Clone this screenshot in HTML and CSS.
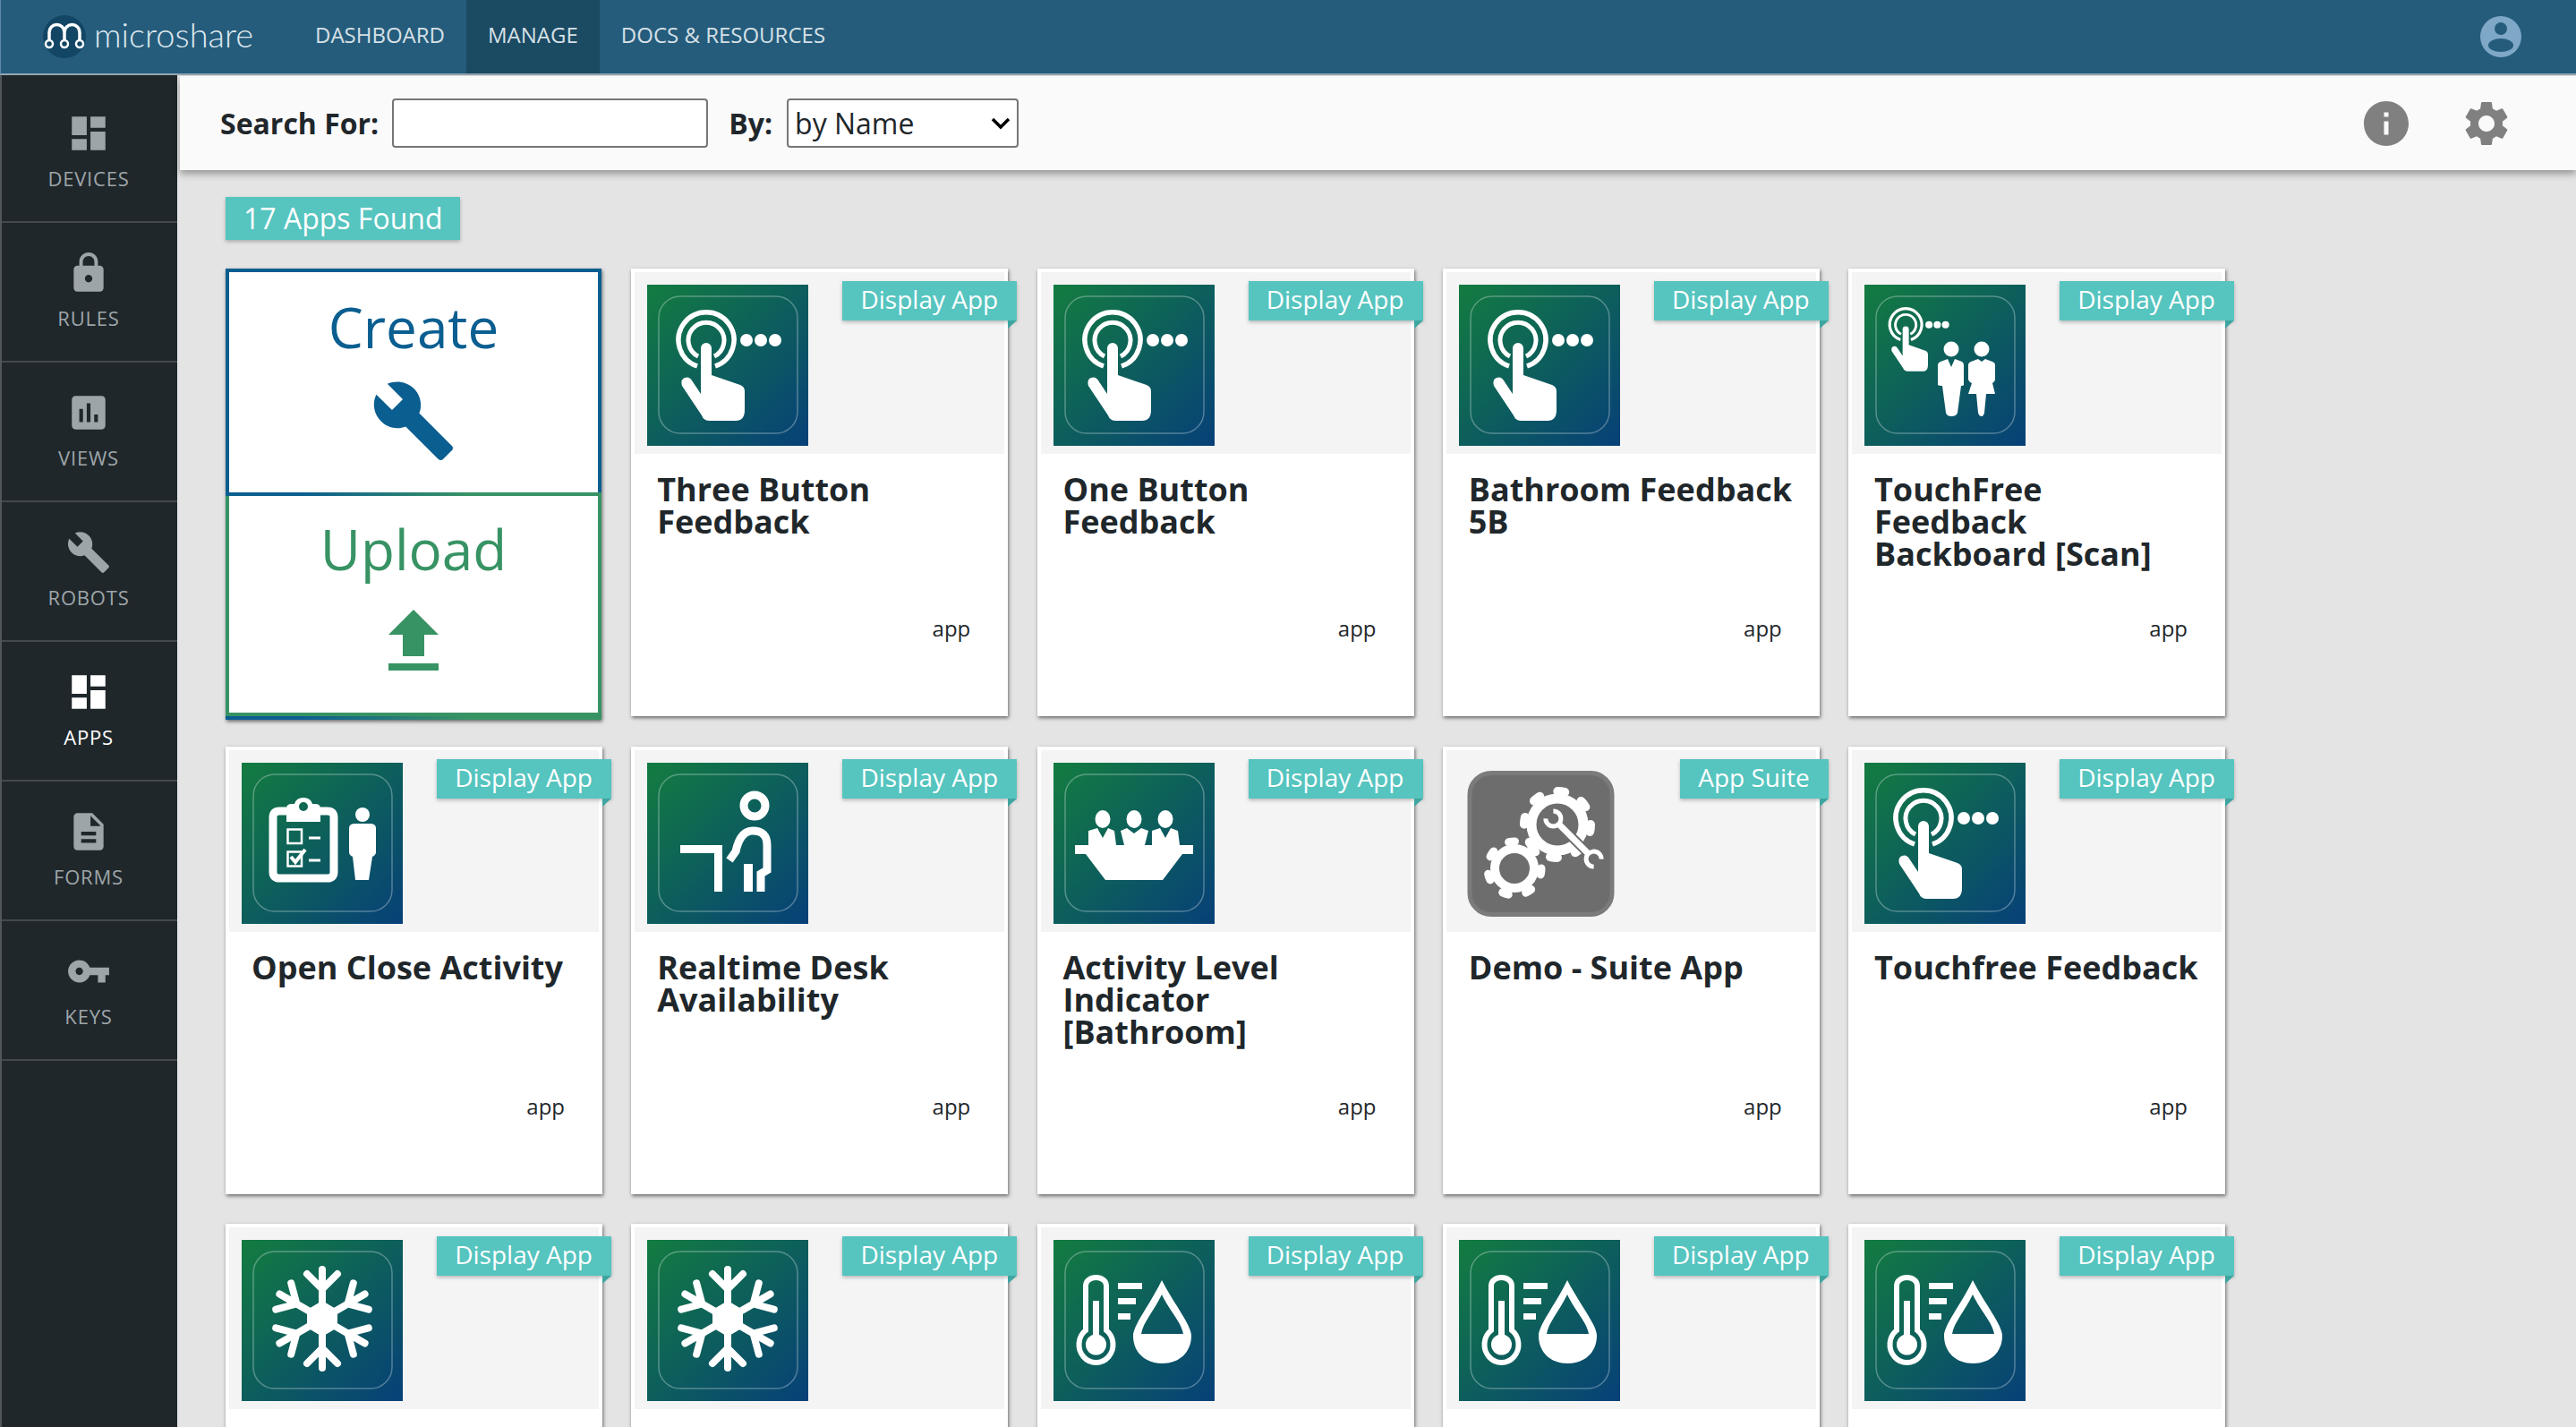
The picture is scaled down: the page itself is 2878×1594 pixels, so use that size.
FILE: index.html
```html
<!DOCTYPE html>
<html lang="en">
<head>
<meta charset="utf-8">
<title>Microshare - Apps</title>
<link rel="stylesheet" href="styles.css">
</head>
<body>
<svg class="sprite" xmlns="http://www.w3.org/2000/svg">
  <symbol id="hand" viewBox="0 0 180 180">
    <path class="line" d="M56 91A31 31 0 1 1 76 91" stroke-width="5.5"/>
    <path class="line" d="M57 80A20 20 0 1 1 75 80" stroke-width="5"/>
    <circle cx="111" cy="62" r="7"/><circle cx="127" cy="62" r="7"/><circle cx="143" cy="62" r="7"/>
    <path d="M60 71a6 6 0 0 1 12 0V101L104 112Q109 114 109 119V140Q109 152 99 152H70Q63 152 61 146L39 113Q37 106 42 104Q47 102 50 107L60 122Z"/>
  </symbol>
  <symbol id="i-touch" viewBox="0 0 180 180">
    <rect class="frame" x="13" y="13" width="155" height="153" rx="24"/>
    <use href="#hand" width="180" height="180"/>
  </symbol>
  <symbol id="i-people" viewBox="0 0 180 180">
    <rect class="frame" x="13" y="13" width="155" height="153" rx="24"/>
    <use href="#hand" x="8" y="9" width="104" height="104"/>
    <circle cx="97" cy="72" r="8.5"/><circle cx="131" cy="72" r="8.5"/>
    <path d="M82 90Q82 87 85 86L93 83L97 92L101 83L109 86Q111 87 111 90V112Q111 113 108 113L104 143Q103 147 97 147Q92 147 91 143L87 113Q83 113 82 112Z"/>
    <path d="M116 90Q116 87 119 86L127 83L131 86L135 83L143 86Q146 87 146 90V106Q146 108 143 110L146 122H136L134 143Q133 147 131 147Q128 147 127 143L125 122H116L120 110Q116 108 116 105Z"/>
  </symbol>
  <symbol id="i-clipboard" viewBox="0 0 180 180">
    <rect class="frame" x="13" y="13" width="155" height="153" rx="24"/>
    <path class="line" d="M50 54H42Q35 54 35 61V122Q35 129 42 129H96Q103 129 103 122V61Q103 54 96 54H88" stroke-width="9"/>
    <path fill-rule="evenodd" d="M50 51Q50 46 56 46H59Q61 39 69 39Q77 39 79 46H82Q88 46 88 51V66H50ZM69 44A5 5 0 1 0 69 54A5 5 0 1 0 69 44Z"/>
    <rect class="line" x="51.5" y="74.5" width="15.5" height="15.5" stroke-width="2.5"/>
    <rect class="line" x="51.5" y="99.5" width="15.5" height="16" stroke-width="2.5"/>
    <path class="line" d="M55 105L60 111L71 97" stroke-width="4"/>
    <rect x="75" y="82.5" width="13" height="3"/><rect x="75" y="107.5" width="13" height="3"/>
    <circle cx="135" cy="58" r="8"/>
    <path d="M120 73Q120 68 127 68H143Q150 68 150 73V100Q150 103 146 105L142 131H127L124 105Q120 103 120 100Z"/>
  </symbol>
  <symbol id="i-desk" viewBox="0 0 180 180">
    <rect class="frame" x="13" y="13" width="155" height="153" rx="24"/>
    <circle class="line" cx="120" cy="48" r="12" stroke-width="9"/>
    <path d="M37 92H84V144H75V101H37Z"/>
    <path class="line" d="M92 109L99 99Q104 76 118 76Q134 76 134 92V120L127 124V144" stroke-width="9"/>
    <rect x="108" y="113" width="10" height="31"/>
  </symbol>
  <symbol id="i-meeting" viewBox="0 0 180 180">
    <rect class="frame" x="13" y="13" width="155" height="153" rx="24"/>
    <ellipse cx="55" cy="63" rx="8.5" ry="10"/><ellipse cx="90" cy="63" rx="8.5" ry="10"/><ellipse cx="125" cy="63" rx="8.5" ry="10"/>
    <path d="M39 76L49 73L55 84L61 73L68 76L70 92H39Z"/>
    <path d="M75 76L82 73L90 79L98 73L106 76L102 92H79Z"/>
    <path d="M110 76L119 73L125 84L131 73L139 76L141 92H110Z"/>
    <path d="M24 92H156V102H144L122 131H58L36 102H24Z"/>
  </symbol>
  <symbol id="i-gears" viewBox="0 0 180 180">
    <rect class="suite-box" x="12" y="11.5" width="159" height="158" rx="24"/>
    <circle class="line" cx="110" cy="69" r="29" stroke-width="11"/>
    <circle class="teeth" cx="110" cy="69" r="37" stroke-width="10" stroke-dasharray="8 21.06"/>
    <circle class="line" cx="62" cy="118" r="22" stroke-width="10"/>
    <circle class="teeth" cx="62" cy="118" r="30" stroke-width="9" stroke-dasharray="7 19.93"/>
    <g transform="translate(128 85) rotate(45)">
      <path class="gap" d="M-24 0H24M-38 -6A8.5 8.5 0 1 1 -38 6M38 -6A8.5 8.5 0 1 0 38 6"/>
      <path class="line" d="M-38 -6A8.5 8.5 0 1 1 -38 6M38 -6A8.5 8.5 0 1 0 38 6" stroke-width="5"/>
      <rect class="wrench-bar" x="-25" y="-3.5" width="50" height="7"/>
    </g>
  </symbol>
  <symbol id="i-snow" viewBox="0 0 180 180">
    <rect class="frame" x="13" y="13" width="155" height="153" rx="24"/>
    <path d="M90 68L107 78V98L90 108L73 98V78Z"/>
    <g id="arm"><path class="line round" d="M90 88V33M90 55L73 38M90 55L107 38" stroke-width="8"/></g>
    <use href="#arm" transform="rotate(60 90 88)"/><use href="#arm" transform="rotate(120 90 88)"/>
    <use href="#arm" transform="rotate(180 90 88)"/><use href="#arm" transform="rotate(240 90 88)"/><use href="#arm" transform="rotate(300 90 88)"/>
  </symbol>
  <symbol id="i-thermo" viewBox="0 0 180 180">
    <rect class="frame" x="13" y="13" width="155" height="153" rx="24"/>
    <path class="line" d="M36 101V51a11.5 9 0 0 1 23 0V101a19 20 0 1 1-23 0Z" stroke-width="6"/>
    <rect x="44" y="68" width="7" height="45"/><circle cx="47.5" cy="117" r="11.5"/>
    <rect x="72" y="48" width="27" height="7"/><rect x="72" y="65" width="20" height="7"/><rect x="72" y="82" width="14" height="7"/>
    <path fill-rule="evenodd" d="M121 45C135 72 154 95 154 107C154 126 140 138 121.5 138C103 138 89 126 89 107C89 95 108 72 121 45ZM121 61C112 80 100 92 98 105H145C143 92 130 80 121 61Z"/>
  </symbol>
</svg>

<header class="topbar">
  <a class="brand">
    <svg class="brand-mark" viewBox="0 0 48 48">
      <circle cx="24" cy="24" r="24" fill="#124664"/>
      <path class="brand-arch" d="M7 31V19a8.5 8.5 0 0 1 17 0V31M24 19a8.5 8.5 0 0 1 17 0V31"/>
      <circle class="brand-node" cx="7" cy="32" r="4"/><circle class="brand-node" cx="24" cy="32" r="4"/><circle class="brand-node" cx="41" cy="32" r="4"/>
    </svg>
    <span class="brand-name">microshare</span>
  </a>
  <nav class="topnav">
    <a class="topnav-item">DASHBOARD</a>
    <a class="topnav-item is-active">MANAGE</a>
    <a class="topnav-item">DOCS &amp; RESOURCES</a>
  </nav>
  <svg class="account" viewBox="0 0 46 46">
    <circle cx="23" cy="23" r="23" fill="#7fa8c6"/>
    <circle cx="23" cy="14" r="7" fill="#255c7c"/>
    <ellipse cx="23" cy="32.5" rx="14" ry="7.5" fill="#255c7c"/>
  </svg>
</header>

<div class="shell">
  <aside class="sidebar">
    <a class="side-item"><svg class="side-icon" viewBox="0 0 24 24"><path d="M3 13h8V3H3v10zm0 8h8v-6H3v6zm10 0h8V11h-8v10zm0-18v6h8V3h-8z"/></svg><span>DEVICES</span></a>
    <a class="side-item"><svg class="side-icon" viewBox="0 0 24 24"><path d="M18 8h-1V6c0-2.76-2.24-5-5-5S7 3.24 7 6v2H6c-1.1 0-2 .9-2 2v10c0 1.1.9 2 2 2h12c1.1 0 2-.9 2-2V10c0-1.1-.9-2-2-2zm-6 9c-1.1 0-2-.9-2-2s.9-2 2-2 2 .9 2 2-.9 2-2 2zm3.1-9H8.9V6c0-1.71 1.39-3.1 3.1-3.1 1.71 0 3.1 1.39 3.1 3.1v2z"/></svg><span>RULES</span></a>
    <a class="side-item"><svg class="side-icon" viewBox="0 0 24 24"><path d="M19 3H5c-1.1 0-2 .9-2 2v14c0 1.1.9 2 2 2h14c1.1 0 2-.9 2-2V5c0-1.1-.9-2-2-2zM9 17H7v-7h2v7zm4 0h-2V7h2v10zm4 0h-2v-4h2v4z"/></svg><span>VIEWS</span></a>
    <a class="side-item"><svg class="side-icon" viewBox="0 0 24 24"><path d="M22.7 19l-9.1-9.1c.9-2.3.4-5-1.5-6.9-2-2-5-2.4-7.4-1.3L9 6 6 9 1.6 4.7C.4 7.1.9 10.1 2.9 12.1c1.9 1.9 4.6 2.4 6.9 1.5l9.1 9.1c.4.4 1 .4 1.4 0l2.3-2.3c.5-.4.5-1.1.1-1.4z"/></svg><span>ROBOTS</span></a>
    <a class="side-item is-active"><svg class="side-icon" viewBox="0 0 24 24"><path d="M3 13h8V3H3v10zm0 8h8v-6H3v6zm10 0h8V11h-8v10zm0-18v6h8V3h-8z"/></svg><span>APPS</span></a>
    <a class="side-item"><svg class="side-icon" viewBox="0 0 24 24"><path d="M14 2H6c-1.1 0-1.99.9-1.99 2L4 20c0 1.1.89 2 1.99 2H18c1.1 0 2-.9 2-2V8l-6-6zm2 16H8v-2h8v2zm0-4H8v-2h8v2zm-3-5V3.5L18.5 9H13z"/></svg><span>FORMS</span></a>
    <a class="side-item"><svg class="side-icon" viewBox="0 0 24 24"><path d="M12.65 10C11.83 7.67 9.61 6 7 6c-3.31 0-6 2.69-6 6s2.69 6 6 6c2.61 0 4.83-1.67 5.65-4H17v4h4v-4h2v-4H12.65zM7 14c-1.1 0-2-.9-2-2s.9-2 2-2 2 .9 2 2-.9 2-2 2z"/></svg><span>KEYS</span></a>
  </aside>

  <main class="main">
    <form class="searchbar">
      <label class="search-label" for="q">Search For:</label>
      <input class="search-input" id="q" type="text">
      <label class="search-label by-label" for="by">By:</label>
      <select class="search-select" id="by"><option>by Name</option></select>
      <div class="tools">
        <svg class="tool" viewBox="0 0 24 24"><path d="M12 2C6.48 2 2 6.48 2 12s4.48 10 10 10 10-4.48 10-10S17.52 2 12 2zm1 15h-2v-6h2v6zm0-8h-2V7h2v2z"/></svg>
        <svg class="tool" viewBox="0 0 24 24"><path d="M19.14 12.94c.04-.3.06-.61.06-.94 0-.32-.02-.64-.07-.94l2.03-1.58c.18-.14.23-.41.12-.61l-1.92-3.32c-.12-.22-.37-.29-.59-.22l-2.39.96c-.5-.38-1.03-.7-1.62-.94l-.36-2.54c-.04-.24-.24-.41-.48-.41h-3.84c-.24 0-.43.17-.47.41l-.36 2.54c-.59.24-1.13.57-1.62.94l-2.39-.96c-.22-.08-.47 0-.59.22L2.74 8.87c-.12.21-.08.47.12.61l2.03 1.58c-.05.3-.09.63-.09.94s.02.64.07.94l-2.03 1.58c-.18.14-.23.41-.12.61l1.92 3.32c.12.22.37.29.59.22l2.39-.96c.5.38 1.03.7 1.62.94l.36 2.54c.05.24.24.41.48.41h3.84c.24 0 .44-.17.47-.41l.36-2.54c.59-.24 1.13-.56 1.62-.94l2.39.96c.22.08.47 0 .59-.22l1.92-3.32c.12-.22.07-.47-.12-.61l-2.01-1.58zM12 15.6c-1.98 0-3.6-1.62-3.6-3.6s1.62-3.6 3.6-3.6 3.6 1.62 3.6 3.6-1.62 3.6-3.6 3.6z"/></svg>
      </div>
    </form>

    <div class="content">
      <div class="count-chip">17 Apps Found</div>
      <section class="grid">
        <div class="action-card">
          <a class="pane pane-create">
            <span class="pane-title">Create</span>
            <svg class="pane-icon pane-wrench" viewBox="0 0 24 24"><path d="M22.7 19l-9.1-9.1c.9-2.3.4-5-1.5-6.9-2-2-5-2.4-7.4-1.3L9 6 6 9 1.6 4.7C.4 7.1.9 10.1 2.9 12.1c1.9 1.9 4.6 2.4 6.9 1.5l9.1 9.1c.4.4 1 .4 1.4 0l2.3-2.3c.5-.4.5-1.1.1-1.4z"/></svg>
          </a>
          <div class="pane-rule"></div>
          <a class="pane pane-upload">
            <span class="pane-title">Upload</span>
            <svg class="pane-icon" viewBox="0 0 24 24"><path d="M9 16h6v-6h4l-7-7-7 7h4zm-4 2h14v2H5z"/></svg>
          </a>
          <div class="pane-rule"></div>
        </div>

        <article class="card">
          <div class="card-head"><svg class="app-icon"><use href="#i-touch"/></svg><span class="tag">Display App</span></div>
          <h2 class="card-title">Three Button Feedback</h2><p class="card-type">app</p>
        </article>
        <article class="card">
          <div class="card-head"><svg class="app-icon"><use href="#i-touch"/></svg><span class="tag">Display App</span></div>
          <h2 class="card-title">One Button Feedback</h2><p class="card-type">app</p>
        </article>
        <article class="card">
          <div class="card-head"><svg class="app-icon"><use href="#i-touch"/></svg><span class="tag">Display App</span></div>
          <h2 class="card-title">Bathroom Feedback 5B</h2><p class="card-type">app</p>
        </article>
        <article class="card">
          <div class="card-head"><svg class="app-icon"><use href="#i-people"/></svg><span class="tag">Display App</span></div>
          <h2 class="card-title">TouchFree Feedback Backboard [Scan]</h2><p class="card-type">app</p>
        </article>

        <article class="card">
          <div class="card-head"><svg class="app-icon"><use href="#i-clipboard"/></svg><span class="tag">Display App</span></div>
          <h2 class="card-title">Open Close Activity</h2><p class="card-type">app</p>
        </article>
        <article class="card">
          <div class="card-head"><svg class="app-icon"><use href="#i-desk"/></svg><span class="tag">Display App</span></div>
          <h2 class="card-title">Realtime Desk Availability</h2><p class="card-type">app</p>
        </article>
        <article class="card">
          <div class="card-head"><svg class="app-icon"><use href="#i-meeting"/></svg><span class="tag">Display App</span></div>
          <h2 class="card-title">Activity Level Indicator [Bathroom]</h2><p class="card-type">app</p>
        </article>
        <article class="card">
          <div class="card-head"><svg class="app-icon suite"><use href="#i-gears"/></svg><span class="tag">App Suite</span></div>
          <h2 class="card-title">Demo - Suite App</h2><p class="card-type">app</p>
        </article>
        <article class="card">
          <div class="card-head"><svg class="app-icon"><use href="#i-touch"/></svg><span class="tag">Display App</span></div>
          <h2 class="card-title">Touchfree Feedback</h2><p class="card-type">app</p>
        </article>

        <article class="card">
          <div class="card-head"><svg class="app-icon"><use href="#i-snow"/></svg><span class="tag">Display App</span></div>
        </article>
        <article class="card">
          <div class="card-head"><svg class="app-icon"><use href="#i-snow"/></svg><span class="tag">Display App</span></div>
        </article>
        <article class="card">
          <div class="card-head"><svg class="app-icon"><use href="#i-thermo"/></svg><span class="tag">Display App</span></div>
        </article>
        <article class="card">
          <div class="card-head"><svg class="app-icon"><use href="#i-thermo"/></svg><span class="tag">Display App</span></div>
        </article>
        <article class="card">
          <div class="card-head"><svg class="app-icon"><use href="#i-thermo"/></svg><span class="tag">Display App</span></div>
        </article>
      </section>
    </div>
  </main>
</div>
</body>
</html>
```

FILE: styles.css
```css
* { box-sizing: border-box; }

html, body {
  margin: 0;
  height: 100%;
  overflow: hidden;
}

body {
  display: flex;
  flex-direction: column;
  height: 1594px;
  background: #e4e4e4;
  color: #1f272b;
  font-family: "Open Sans", "Liberation Sans", sans-serif;
}

.sprite { display: none; }
.line { fill: none; stroke: #fff; }
.round { stroke-linecap: round; stroke-linejoin: round; }
.frame { fill: none; stroke: rgba(255, 255, 255, .3); stroke-width: 1.5; }
.suite-box { fill: #6d6d6d; stroke: #7b7b7b; stroke-width: 5; }
.teeth { fill: none; stroke: #fff; stroke-linecap: round; }
.gap { fill: none; stroke: #6d6d6d; stroke-width: 11; }
.wrench-bar { fill: #fff; }

/* top bar */
.topbar {
  flex: none;
  display: flex;
  align-items: stretch;
  height: 84px;
  padding-right: 61px;
  background: #255c7c;
  border-left: 1px solid #5f8ba5;
  border-bottom: 2px solid #93a7b2;
}

.brand {
  display: flex;
  align-items: center;
  gap: 9px;
  width: 327px;
  padding-left: 47px;
}

.brand-mark { flex: none; width: 48px; height: 48px; }
.brand-arch { fill: none; stroke: #fff; stroke-width: 3.5; }
.brand-node { fill: #124664; stroke: #fff; stroke-width: 2.5; }

.brand-name {
  margin-top: -7px;
  color: #dfe9ef;
  font-family: Lato, "Open Sans", sans-serif;
  font-size: 38px;
  font-weight: 300;
}

.topnav { display: flex; }

.topnav-item {
  display: flex;
  align-items: center;
  padding: 0 24px 6px;
  color: #d6e0e6;
  font-size: 24px;
}

.topnav-item.is-active { background: #1b4a63; }

.account {
  align-self: center;
  width: 46px;
  height: 46px;
  margin-left: auto;
}

/* sidebar */
.shell {
  flex: 1;
  display: flex;
  min-height: 0;
}

.sidebar {
  flex: none;
  width: 198px;
  padding-top: 9px;
  background: #1f272b;
  border-left: 2px solid #50565a;
}

.side-item {
  display: flex;
  flex-direction: column;
  align-items: center;
  height: 156px;
  padding: 31px 2px 0 0;
  color: #9ea5a9;
  border-bottom: 2px solid #43494c;
  font-size: 22px;
  letter-spacing: .8px;
  line-height: 30px;
}

.side-item.is-active { color: #fff; }

.side-icon {
  width: 50px;
  height: 50px;
  margin-bottom: 10px;
  fill: currentColor;
}

/* search bar */
.main {
  flex: 1;
  min-width: 0;
  display: flex;
  flex-direction: column;
}

.searchbar {
  flex: none;
  display: flex;
  align-items: center;
  height: 105px;
  margin: 1px 0 0 3px;
  padding: 0 70px 0 45px;
  background: #fafafa;
  box-shadow: 0 4px 8px rgba(0, 0, 0, .35);
}

.search-label {
  color: #1f272b;
  font-size: 32px;
  font-weight: 700;
}

.search-input {
  width: 353px;
  height: 55px;
  margin-left: 15px;
  border: 2px solid #767676;
  border-radius: 4px;
  background: #fff;
}

.by-label { margin-left: 23px; }

.search-select {
  appearance: none;
  width: 259px;
  height: 55px;
  margin-left: 16px;
  padding: 0 7px;
  border: 2px solid #767676;
  border-radius: 4px;
  background: #fff url("data:image/svg+xml,%3Csvg xmlns='http://www.w3.org/2000/svg' viewBox='0 0 22 14'%3E%3Cpath d='M2 2l9 9 9-9' fill='none' stroke='%23000' stroke-width='3.5'/%3E%3C/svg%3E") no-repeat right 7px center / 22px 14px;
  color: #1f272b;
  font-family: inherit;
  font-size: 32px;
}

.tools {
  display: flex;
  gap: 52px;
  margin-left: auto;
}

.tool { width: 60px; height: 60px; fill: #808080; }

/* content */
.content {
  flex: 1;
  min-height: 0;
  padding: 30px 0 0 54px;
}

.count-chip {
  display: inline-block;
  height: 48px;
  padding: 0 20px;
  background: #56c4bf;
  box-shadow: 0 2px 4px rgba(0, 0, 0, .25);
  color: #fff;
  font-size: 32px;
  line-height: 47px;
  vertical-align: top;
}

.grid {
  display: grid;
  grid-template-columns: repeat(5, 421px);
  grid-auto-rows: 500px;
  column-gap: 32.25px;
  row-gap: 33.5px;
  margin-top: 32px;
}

/* create / upload */
.action-card {
  display: flex;
  flex-direction: column;
  height: 504px;
  width: 420px;
  background: #fff;
  box-shadow: 1px 2px 4px rgba(0, 0, 0, .55);
}

.pane {
  display: flex;
  flex-direction: column;
  align-items: center;
  border-style: solid;
  border-width: 4px;
  font-size: 62px;
}

.pane-create {
  height: 250px;
  padding-top: 20px;
  border-color: #0b5e90;
  border-bottom: 0;
  color: #0b5e90;
}

.pane-upload {
  height: 246px;
  padding-top: 18px;
  border-color: #389364;
  border-top: 0;
  color: #389364;
}

.pane-title { line-height: 82px; }

.pane-icon {
  width: 96px;
  height: 96px;
  margin-top: 15px;
  fill: currentColor;
}

.pane-wrench { margin-top: 16px; }

.pane-rule {
  flex: none;
  height: 4px;
  background: linear-gradient(90deg, #0b5e90 20%, #389364 65%);
}

/* app cards */
.card {
  position: relative;
  padding: 4px;
  background: #fff;
  box-shadow: 1px 2px 4px rgba(0, 0, 0, .55);
  display: flex;
  flex-direction: column;
}

.card-head {
  flex: none;
  height: 203px;
  padding: 14px;
  background: #f4f4f4;
}

.app-icon {
  display: block;
  width: 180px;
  height: 180px;
  fill: #fff;
  background: linear-gradient(135deg, #137c40, #074078);
}

.app-icon.suite { background: none; }

.tag {
  position: absolute;
  top: 14px;
  right: -10px;
  height: 44px;
  padding: 0 21px 0 20px;
  background: #56c4bf;
  box-shadow: 0 2px 4px rgba(0, 0, 0, .25);
  color: #fff;
  font-size: 28px;
  line-height: 41px;
}

.tag::after {
  content: "";
  position: absolute;
  right: 0;
  top: 100%;
  border-top: 9px solid #3ea5a0;
  border-right: 10px solid transparent;
}

.card-title {
  margin: 22px 25px 0;
  font-size: 36px;
  font-weight: 700;
  line-height: 36px;
}

.card-type {
  position: absolute;
  right: 42px;
  bottom: 81px;
  margin: 0;
  font-size: 24px;
  line-height: 34px;
}
```
